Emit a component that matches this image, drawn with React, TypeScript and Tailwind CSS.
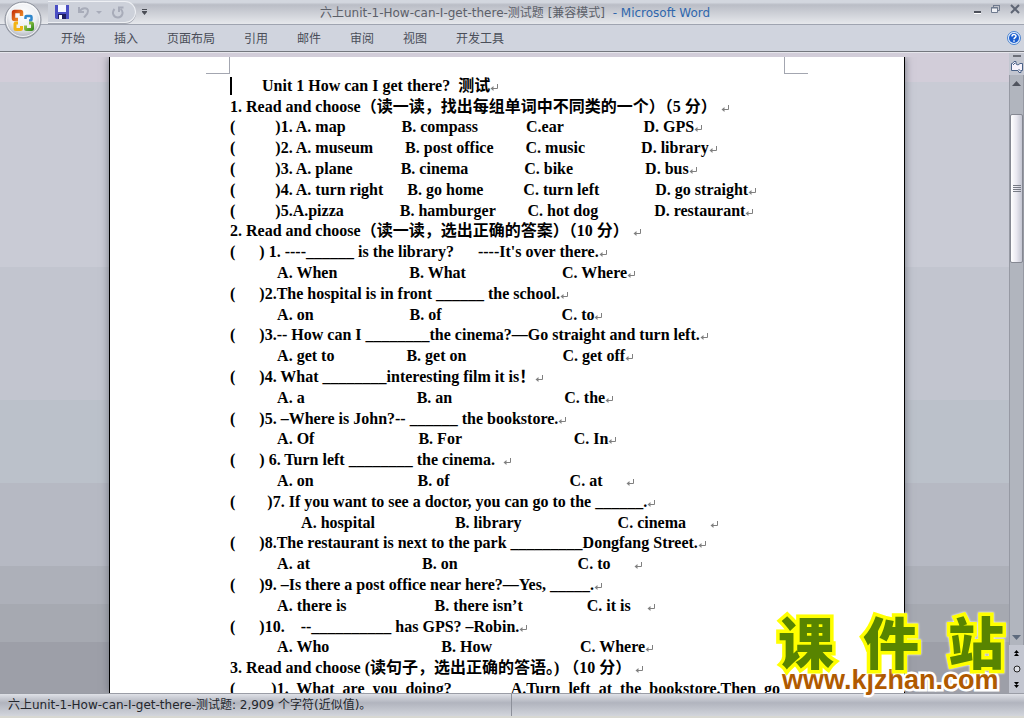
import type { ReactNode } from 'react'

const TABS = ['开始', '插入', '页面布局', '引用', '邮件', '审阅', '视图', '开发工具']

// Runs of blanks are part of the document, so every line keeps its white space
const LINES = [
  '        Unit 1 How can I get there?  测试',
  '1. Read and choose（读一读，找出每组单词中不同类的一个）（5 分） ',
  '(          )1. A. map              B. compass            C.ear                    D. GPS',
  '(          )2. A. museum        B. post office        C. music              D. library',
  '(          )3. A. plane            B. cinema              C. bike                  D. bus',
  '(          )4. A. turn right      B. go home          C. turn left              D. go straight',
  '(          )5.A.pizza              B. hamburger        C. hot dog              D. restaurant',
  '2. Read and choose（读一读，选出正确的答案）（10 分） ',
  '(      ) 1. ----______ is the library?      ----It\'s over there.',
  '            A. When                  B. What                        C. Where',
  '(      )2.The hospital is in front ______ the school.',
  '            A. on                        B. of                              C. to',
  '(      )3.-- How can I ________the cinema?—Go straight and turn left.',
  '            A. get to                  B. get on                        C. get off',
  '(      )4. What ________interesting film it is！',
  '            A. a                            B. an                            C. the',
  '(      )5. –Where is John?-- ______ the bookstore.',
  '            A. Of                          B. For                            C. In',
  '(      ) 6. Turn left ________ the cinema.  ',
  '            A. on                          B. of                              C. at      ',
  '(        )7. If you want to see a doctor, you can go to the ______.',
  '                  A. hospital                    B. library                        C. cinema      ',
  '(      )8.The restaurant is next to the park _________Dongfang Street.',
  '            A. at                            B. on                              C. to      ',
  '(      )9. –Is there a post office near here?—Yes, _____.',
  '            A. there is                      B. there isn’t                C. it is    ',
  '(      )10.    --__________ has GPS? –Robin.',
  '            A. Who                            B. How                      C. Where',
  '3. Read and choose (读句子，选出正确的答语。) （10 分） ',
  '(         )1.  What  are  you  doing?               A.Turn  left  at  the  bookstore.Then  go',
]

function ReturnMark() {
  return (
    <svg className="inline-block h-2 w-2" viewBox="0 0 8 8" fill="none" stroke="#808080" aria-hidden="true">
      <path d="M7.5 1v4.5H1" />
      <path d="M3.5 3v5L.5 5.5z" fill="#808080" stroke="none" />
    </svg>
  )
}

function OfficeLogo() {
  return (
    <svg className="h-10 w-10" viewBox="0 0 40 40" aria-hidden="true">
      <defs>
        <radialGradient id="orb" cx="50%" cy="35%" r="65%">
          <stop offset="0" stopColor="#ffffff" />
          <stop offset="0.6" stopColor="#eceef2" />
          <stop offset="1" stopColor="#a9adb7" />
        </radialGradient>
        <linearGradient id="red" x2="1" y2="1">
          <stop offset="0" stopColor="#c93a0c" />
          <stop offset="1" stopColor="#f59a2c" />
        </linearGradient>
        <linearGradient id="green" x2="1" y2="1">
          <stop offset="0" stopColor="#a5cf4c" />
          <stop offset="1" stopColor="#3d8f22" />
        </linearGradient>
      </defs>
      <circle cx="20" cy="20" r="18" fill="url(#orb)" stroke="#8b909b" />
      <circle cx="20" cy="20" r="16.5" fill="none" stroke="#fff" strokeOpacity="0.8" />
      <g fill="none" strokeLinejoin="round">
        <path d="M15 19.5h-3.5a1 1 0 0 1-1-1v-6a1 1 0 0 1 1-1h6a1 1 0 0 1 1 1V16" stroke="url(#red)" strokeWidth="3.5" />
        <path d="M22.5 19v-2a1 1 0 0 1 1-1h4a1 1 0 0 1 1 1v2.500a1 1 0 0 1-1 1H26" stroke="#2f86cc" strokeWidth="2.5" />
        <path d="M15 23h-2a1 1 0 0 0-1 1v4.500a1 1 0 0 0 1 1h4.500a1 1 0 0 0 1-1V26" stroke="#f2b414" strokeWidth="3" />
        <path d="M22.500 25.500V28.500a1 1 0 0 0 1 1h5a1 1 0 0 0 1-1v-4.500a1 1 0 0 0-1-1H26" stroke="url(#green)" strokeWidth="3" />
      </g>
    </svg>
  )
}

function IconButton({ label, className, children }: { label: string; className?: string; children: ReactNode }) {
  return (
    <button type="button" aria-label={label} className={`flex shrink-0 items-center justify-center ${className ?? ''}`}>
      {children}
    </button>
  )
}

function TitleBar() {
  return (
    <header className="grid h-6 shrink-0 grid-cols-[1fr_auto_1fr] items-center bg-linear-to-b from-[#d3d7df] from-10% via-[#babdc6] via-20% to-[#e6e8ec]">
      <div className="flex h-6 items-center pl-[48px]">
        <div className="flex h-[22px] w-[88px] items-center rounded-r-full border border-l-0 border-[#eef0f4] bg-[#cdd1da] pl-1.5 shadow-[0_1px_0_#a4a8b2]">
          <IconButton label="保存" className="w-4">
            <svg className="h-3.5 w-3.5" viewBox="0 0 14 14">
              <path d="M0 0h14v14H1L0 13z" fill="#4a4fc4" />
              <path d="M3 0h8v7H3z" fill="#f4f7ff" />
              <path d="M3 9h8v5H3z" fill="#1d1d60" />
              <path d="M4 10h3v4H4z" fill="#fff" />
            </svg>
          </IconButton>
          <IconButton label="撤消" className="ml-1.5 w-4">
            <svg className="h-3.5 w-3.5" viewBox="0 0 14 14" fill="none" stroke="#a8acb9" strokeWidth="2">
              <path d="M2 2v5h5M2.5 6.5C5 2.5 11 2 11 6c0 3-2 4-4 6.5" />
            </svg>
          </IconButton>
          <span className="ml-1 border-x-[3px] border-t-[3px] border-x-transparent border-t-[#a8acb9]" />
          <IconButton label="重复" className="ml-2 w-4">
            <svg className="h-3.5 w-3.5" viewBox="0 0 14 14" fill="none" stroke="#a8acb9" strokeWidth="2">
              <path d="M3.5 4C0 8 3 12.5 7 12.500S13.5 7 9.5 4M8 7V2.5h4.5" />
            </svg>
          </IconButton>
        </div>
        <IconButton label="自定义快速访问工具栏" className="ml-1.5 h-4">
          <svg className="h-1.5 w-[5px]" viewBox="0 0 5 6" fill="#4a4d55">
            <path d="M0 0h5v1H0zM0 2h5v1L2.5 6 0 3z" />
          </svg>
        </IconButton>
      </div>
      <h1 className="pt-0.5 pl-1.5 whitespace-pre text-[#5c6069]">
        六上unit-1-How-can-I-get-there-测试题 [兼容模式] <span className="text-[#2f67ad]"> - Microsoft Word</span>
      </h1>
      <div className="flex items-start justify-end gap-2.5 pr-1 pb-1.5">
        <IconButton label="最小化" className="h-3">
          <svg className="h-3 w-[7px]" viewBox="0 0 7 12">
            <path d="M0 8h7v3H0z" fill="#fff" />
            <path d="M0 8h7v2H0z" fill="#4c505a" />
          </svg>
        </IconButton>
        <IconButton label="还原" className="h-3">
          <svg className="h-3 w-[9px]" viewBox="0 0 9 12" fill="none" stroke="#6f7a8e">
            <path d="M.5 4.500h6v5h-6z" fill="#eef0f5" />
            <path d="M2.5 4V2.5h6v5H7M2 2.5h7M0 5h7" />
          </svg>
        </IconButton>
        <IconButton label="关闭" className="h-3">
          <svg className="h-3 w-2.5" viewBox="0 0 10 12" fill="none" stroke="#5f6675" strokeWidth="2">
            <path d="M1 2l8 8M9 2l-8 8" />
          </svg>
        </IconButton>
      </div>
    </header>
  )
}

function RibbonTabs() {
  return (
    <nav className="flex h-[28px] shrink-0 items-center justify-between border-t border-b border-t-[#9fa4b0] border-b-[#74777e] bg-[#d0d4de] pr-[3px] pl-[61px]">
      <div className="flex gap-[29px] pt-0.5">
        {TABS.map((tab) => (
          <button key={tab} type="button" className="text-[#4a4e59]">
            {tab}
          </button>
        ))}
      </div>
      <IconButton label="帮助">
        <svg className="h-3.5 w-3.5" viewBox="0 0 14 14">
          <circle cx="7" cy="7" r="6.5" fill="#e8f1fc" stroke="#4b83cf" />
          <circle cx="7" cy="7" r="5" fill="#1c5fd0" />
          <path d="M5 5.5C5 3 9 3 9 5.3 9 6.6 7 6.7 7 8.3M7 9.3v1.5" fill="none" stroke="#fff" strokeWidth="1.5" />
        </svg>
      </IconButton>
    </nav>
  )
}

function DocumentPage() {
  return (
    <main className="h-full w-[796px] shrink-0 overflow-hidden border-x border-black bg-white shadow-[0_0_8px_#70747e]">
      <div className="flex justify-between pr-24 pl-24">
        <div className="h-[17px] w-6 border-r border-b border-[#a3a6b0]" />
        <div className="h-[17px] w-6 border-b border-l border-[#a3a6b0]" />
      </div>
      <div className="relative pt-px pl-[120px] font-['Liberation_Serif','Noto_Sans_CJK_SC',serif] text-base font-bold text-black">
        <span className="absolute top-[3px] h-[18px] w-0.5 bg-black" />
        {LINES.map((line, i) => (
          <p key={i} className="h-[21px] leading-[21px] whitespace-pre nth-[5n+3]:h-5">
            {line}
            {i < LINES.length - 1 && <ReturnMark />}
          </p>
        ))}
      </div>
    </main>
  )
}

function ScrollBar() {
  return (
    <aside className="flex w-[15px] shrink-0 flex-col items-center bg-[#c3c6d0] pt-0.5">
      <span className="h-0.5 w-2 shrink-0 bg-[#6b6e78]" />
      <IconButton label="标尺" className="mt-0.5 h-4">
        <svg className="h-3 w-3" viewBox="0 0 12 12" fill="#f6f2fb" stroke="#4b6388">
          <path d="M.5 2.5h1l1.500-2h2V3l2 1 2-1.500h2.500v7H10v2H8l-1-2H.5z" />
          <path d="M2 4l2-2M7.500 8l2 2" />
        </svg>
      </IconButton>
      <div className="flex min-h-0 w-full flex-1 flex-col items-center border-x border-[#9699a3] bg-[#b1b5be]">
        <IconButton label="向上滚动" className="h-4 w-full">
          <svg className="h-[5px] w-[9px]" viewBox="0 0 9 5">
            <path d="M4.5 0L9 5H0z" fill="#50545e" />
          </svg>
        </IconButton>
        <div className="mt-[23px] flex h-[149px] w-full flex-col items-center justify-center gap-px rounded-xs border border-[#858892] bg-linear-to-r from-white via-[#e9e8f0] to-[#c3c5d1]">
          <span className="h-px w-2 bg-[#777b85]" />
          <span className="h-px w-2 bg-[#777b85]" />
          <span className="h-px w-2 bg-[#777b85]" />
          <span className="h-px w-2 bg-[#777b85]" />
        </div>
        <IconButton label="向下滚动" className="mt-auto h-4 w-full">
          <svg className="h-[5px] w-[9px]" viewBox="0 0 9 5">
            <path d="M4.5 5L9 0H0z" fill="#5d6a7d" />
          </svg>
        </IconButton>
      </div>
      <div className="flex h-12 shrink-0 flex-col items-center justify-around">
        <IconButton label="前一页">
          <svg className="h-1.5 w-[5px]" viewBox="0 0 5 6">
            <path d="M2.5 0L5 3H0zM2.5 3L5 6H0z" />
          </svg>
        </IconButton>
        <IconButton label="选择浏览对象">
          <svg className="h-2 w-2" viewBox="0 0 8 8">
            <circle cx="4" cy="4" r="3" fill="#dcdee4" stroke="#222" />
          </svg>
        </IconButton>
        <IconButton label="下一页">
          <svg className="h-1.5 w-[5px]" viewBox="0 0 5 6">
            <path d="M2.5 3L5 0H0zM2.5 6L5 3H0z" />
          </svg>
        </IconButton>
      </div>
    </aside>
  )
}

function Watermark() {
  return (
    <div className="absolute right-5 bottom-6 w-[226px] font-bold">
      <div className="flex justify-between font-['Noto_Sans_CJK_SC',sans-serif] text-[56px] leading-[52px] font-black text-[#588400] drop-shadow-[0_0_1px_#fff] [-webkit-text-stroke:7px_#ffff00] [paint-order:stroke_fill]">
        <span>课</span>
        <span>件</span>
        <span>站</span>
      </div>
      <div className="pl-1 font-['Liberation_Sans',sans-serif] text-[27px] leading-7 text-[#b05a00] [-webkit-text-stroke:5px_#ffffff] [paint-order:stroke_fill]">
        www.kjzhan.com
      </div>
    </div>
  )
}

export default function App() {
  return (
    <div className="relative flex h-screen flex-col overflow-hidden bg-[#d2cdd9] font-['DejaVu_Sans','Noto_Sans_CJK_SC',sans-serif] text-xs">
      <TitleBar />
      <RibbonTabs />
      <div className="flex min-h-0 flex-1 border-t border-[#e6e6ec]">
        <div className="min-w-0 flex-1 pt-1">
          <div className="flex h-full justify-center overflow-hidden bg-[linear-gradient(#d2cdd9_4%,#c9cbd5_4%_33%,#c2c5cf_33%_54%,#bbc1ca_54%_67%,#b6b9c3_67%_80%,#adb0b9_80%_86%,#a6a9b1_86%_92%,#9d9fa8_92%)] pl-[5px]">
            <DocumentPage />
          </div>
        </div>
        <ScrollBar />
      </div>
      <footer className="flex h-[25px] shrink-0 items-center border-t border-b-2 border-t-[#9a9da6] border-b-[#d8d8d2] bg-linear-to-b from-[#dfe1e7] via-[#b1b4be] via-40% to-[#d2d5dc] text-[#23262c]">
        <div className="flex h-full w-1/2 items-center border-r border-[#8d909a] pl-2">
          六上unit-1-How-can-I-get-there-测试题: 2,909 个字符(近似值)。
        </div>
      </footer>
      <div className="absolute top-0 left-[3px]">
        <IconButton label="Office 按钮">
          <OfficeLogo />
        </IconButton>
      </div>
      <Watermark />
    </div>
  )
}
